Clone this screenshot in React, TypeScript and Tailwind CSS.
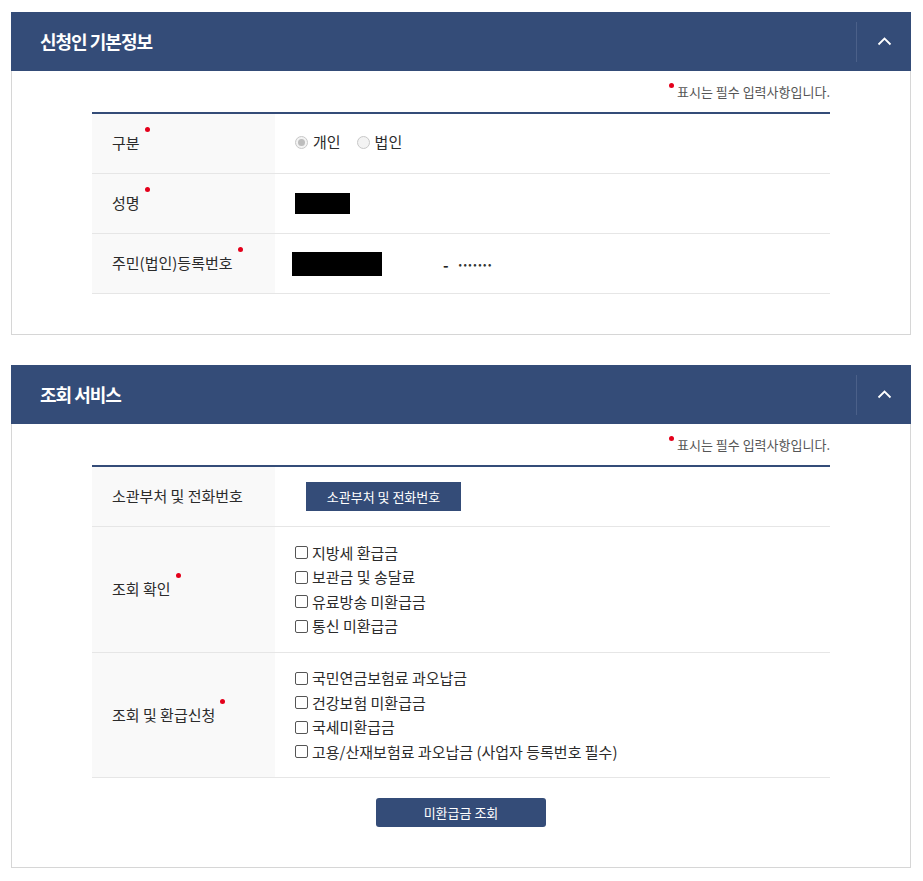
import type { ReactNode } from "react";

const FONT = { fontFamily: '"Noto Sans CJK KR", "Noto Sans", sans-serif' };

function Dot({ className = "" }: { className?: string }) {
  return <span className={`absolute h-[5px] w-[5px] rounded-full bg-[#e4001b] ${className}`} />;
}

function Required({ children }: { children: ReactNode }) {
  return (
    <span className="relative inline-block">
      {children}
      <Dot className="-right-[10px] -top-[5px]" />
    </span>
  );
}

function Radio({ checked, label }: { checked?: boolean; label: string }) {
  return (
    <label className="flex items-center gap-[5px]">
      <span className="flex h-[13px] w-[13px] items-center justify-center rounded-full border border-[#c8c8c8] bg-[#f3f3f3]">
        {checked && <span className="h-[7px] w-[7px] rounded-full bg-[#bdbdbd]" />}
      </span>
      <span>{label}</span>
    </label>
  );
}

function Check({ label }: { label: string }) {
  return (
    <label className="flex h-[24.5px] items-center gap-[4px]">
      <span className="h-[13px] w-[13px] rounded-[2px] border border-[#555] bg-white" />
      <span>{label}</span>
    </label>
  );
}

function Row({ label, children, h = "h-[60px]" }: { label: ReactNode; children: ReactNode; h?: string }) {
  return (
    <div className={`flex border-b border-[#e6e6e6] ${h}`}>
      <div className="flex w-[183px] shrink-0 items-center bg-[#f9f9f9] pl-[20px]">{label}</div>
      <div className="flex flex-1 items-center pl-[20px]">{children}</div>
    </div>
  );
}

function Panel({ title, children }: { title: string; children: ReactNode }) {
  return (
    <section className="w-[900px]">
      <div className="flex h-[59px] items-center justify-between bg-[#344c78]">
        <h2 className="pl-[29px] text-[18px] font-bold tracking-[-1px] text-white">{title}</h2>
        <div className="flex h-[40px] w-[55px] items-center justify-center border-l border-[#4b6089]">
          <svg width="15" height="9" viewBox="0 0 15 9" fill="none">
            <path d="M1.5 7.5 L7.5 1.5 L13.5 7.5" stroke="white" strokeWidth="1.8" />
          </svg>
        </div>
      </div>
      <div className="border border-t-0 border-[#d6d6d6] bg-white px-[80px] pb-[40px] pt-[11px]">
        <p className="flex justify-end text-[13px] leading-[20px] text-[#555]">
          <span className="relative">
            <Dot className="-left-[8px] top-[1px]" />
            표시는 필수 입력사항입니다.
          </span>
        </p>
        {children}
      </div>
    </section>
  );
}

export default function App() {
  return (
    <div className="min-h-screen bg-white pl-[11px] pt-[12px] text-[15px] text-[#2b2b2b]" style={FONT}>
      <Panel title="신청인 기본정보">
        <div className="mt-[10px] border-t-2 border-[#344c78]">
          <Row label={<Required>구분</Required>}>
            <div className="flex items-center gap-[16px] pb-[2px]">
              <Radio checked label="개인" />
              <Radio label="법인" />
            </div>
          </Row>
          <Row label={<Required>성명</Required>}>
            <div className="h-[21px] w-[55px] bg-black" />
          </Row>
          <Row label={<Required>주민(법인)등록번호</Required>}>
            <div className="-ml-[3px] h-[24px] w-[90px] bg-black" />
            <span className="ml-[61px] mt-[3px] font-bold text-[#222]">-</span>
            <span className="ml-[10px] text-[10px] tracking-[1.5px] text-[#333]">•••••••</span>
          </Row>
        </div>
      </Panel>

      <div className="h-[30px]" />

      <Panel title="조회 서비스">
        <div className="mt-[10px] border-t-2 border-[#344c78]">
          <Row label="소관부처 및 전화번호">
            <button className="ml-[11px] h-[29px] w-[155px] bg-[#344c78] text-[13px] text-white">
              소관부처 및 전화번호
            </button>
          </Row>
          <Row label={<Required>조회 확인</Required>} h="h-[126px]">
            <div className="flex flex-col">
              <Check label="지방세 환급금" />
              <Check label="보관금 및 송달료" />
              <Check label="유료방송 미환급금" />
              <Check label="통신 미환급금" />
            </div>
          </Row>
          <Row label={<Required>조회 및 환급신청</Required>} h="h-[125px]">
            <div className="flex flex-col">
              <Check label="국민연금보험료 과오납금" />
              <Check label="건강보험 미환급금" />
              <Check label="국세미환급금" />
              <Check label="고용/산재보험료 과오납금 (사업자 등록번호 필수)" />
            </div>
          </Row>
        </div>
        <div className="mt-[20px] flex justify-center">
          <button className="h-[29px] w-[170px] rounded-[3px] bg-[#344c78] text-[13px] text-white">
            미환급금 조회
          </button>
        </div>
      </Panel>
    </div>
  );
}
